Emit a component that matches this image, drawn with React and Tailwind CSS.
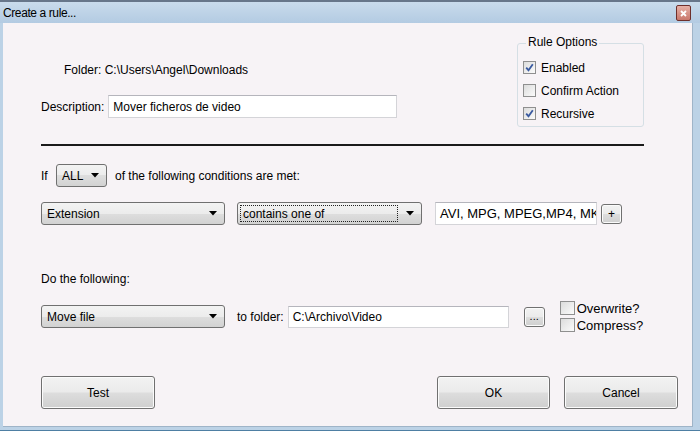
import React from "react";

const font = { fontFamily: '"Liberation Sans", Arial, sans-serif' };

function Arrow() {
  return (
    <svg width="8" height="5" viewBox="0 0 8 5" className="shrink-0">
      <path d="M0 0 H8 L4 4.5 Z" fill="#000" />
    </svg>
  );
}

function Select({ w, text, focus }) {
  return (
    <div
      className={`${w} h-[23px] shrink-0 flex items-center rounded-[3px] border border-[#707070] bg-[linear-gradient(to_bottom,#f3f3f3_0%,#ececec_50%,#dedede_50%,#d2d2d2_100%)] pl-[2px] pr-[7px]`}
    >
      <div
        className={`flex-1 h-[17px] flex items-center pl-[2px] ${focus ? "border border-dotted border-[#222]" : "border border-transparent"}`}
      >
        <span className="text-[12px] leading-none text-black whitespace-nowrap">{text}</span>
      </div>
      <div className="w-[16px] flex justify-end">
        <Arrow />
      </div>
    </div>
  );
}

function Button({ w, children, h = "h-[33px]", textCls = "text-[12px]" }) {
  return (
    <div
      className={`${w} ${h} shrink-0 flex items-center justify-center rounded-[3px] border border-[#707070] bg-[linear-gradient(to_bottom,#f2f2f2_0%,#ebebeb_48%,#dddddd_52%,#cfcfcf_100%)] shadow-[inset_0_0_0_1px_#fbfbfb]`}
    >
      <span className={`${textCls} leading-none text-black`}>{children}</span>
    </div>
  );
}

function Check({ checked, size = "w-[13px] h-[13px]" }) {
  return (
    <div
      className={`${size} shrink-0 border border-[#8f8f8f] bg-[linear-gradient(135deg,#dcdcdc,#fbfbfb)] flex items-center justify-center`}
    >
      {checked && (
        <svg width="9" height="9" viewBox="0 0 9 9">
          <path d="M1.2 4.6 L3.5 7.2 L7.8 1.2" fill="none" stroke="#3a5aa0" strokeWidth="1.8" />
        </svg>
      )}
    </div>
  );
}

function Input({ w, text, h = "h-[23px]", textCls = "text-[12px]" }) {
  return (
    <div className={`${w} ${h} shrink-0 flex items-center bg-white border border-[#d4d4d8] border-t-[#b5b5bc] pl-[4px] overflow-hidden`}>
      <span className={`${textCls} leading-none text-black whitespace-nowrap`}>{text}</span>
    </div>
  );
}

export default function App() {
  return (
    <div className="w-[700px] h-[431px] flex flex-col bg-[#bcd2e6] border-t-2 border-b border-t-[#67768a] border-b-[#4e7fa3] overflow-hidden" style={font}>
      {/* Title bar */}
      <div className="h-[21px] shrink-0 flex items-center justify-between pl-[3px] pr-[9px] bg-[linear-gradient(to_bottom,#c9dbec,#b3cbe2)]">
        <span className="text-[12px] leading-none text-black tracking-[-0.4px]">Create a rule...</span>
        <div className="w-[15px] h-[16px] rounded-[2px] border border-[#6e2f2b] bg-[linear-gradient(to_bottom,#e6b0a6,#c9786c)] flex items-center justify-center mt-[1px]">
          <svg width="7" height="7" viewBox="0 0 7 7">
            <path d="M1 1 L6 6 M6 1 L1 6" stroke="#fff" strokeWidth="1.8" />
          </svg>
        </div>
      </div>
      {/* Body */}
      <div className="flex-1 flex pl-[3px] pr-[7px] pb-[3px] bg-[#bcd2e6]">
        <div className="flex-1 flex flex-col bg-[#f7f3f6] border-r border-b border-[#9fb4c8] pl-[38px] pr-[48px] text-black">
          {/* Top section */}
          <div className="h-[121px] shrink-0 flex justify-between">
            <div className="flex flex-col">
              <div className="mt-[40px] ml-[23px] h-[14px] flex items-center">
                <span className="text-[12px] leading-none">Folder: C:\Users\Angel\Downloads</span>
              </div>
              <div className="mt-[18px] flex items-center gap-[4px]">
                <span className="text-[12px] leading-none">Description:</span>
                <Input w="w-[289px]" text="Mover ficheros de video" />
              </div>
            </div>
            <div className="mt-[20px] w-[127px] h-[84px] relative rounded-[3px] border border-[#d5dfe5] flex flex-col gap-[10px] pt-[17px] pl-[5px]">
              <span className="absolute -top-[8px] left-[8px] px-[2px] bg-[#f7f3f6] text-[12px] leading-none">Rule Options</span>
              <div className="flex items-center gap-[5px]">
                <Check checked />
                <span className="text-[12px] leading-none">Enabled</span>
              </div>
              <div className="flex items-center gap-[5px]">
                <Check />
                <span className="text-[12px] leading-none">Confirm Action</span>
              </div>
              <div className="flex items-center gap-[5px]">
                <Check checked />
                <span className="text-[12px] leading-none">Recursive</span>
              </div>
            </div>
          </div>
          {/* Rule line */}
          <div className="h-[2px] shrink-0 bg-[#1a1a1a]" />
          {/* If row */}
          <div className="mt-[18px] flex items-center">
            <span className="text-[12px] leading-none w-[15px]">If</span>
            <Select w="w-[51px]" text="ALL" />
            <span className="text-[12px] leading-none ml-[8px]">of the following conditions are met:</span>
          </div>
          {/* Condition row */}
          <div className="mt-[15px] flex items-center">
            <Select w="w-[184px]" text="Extension" />
            <div className="ml-[12px]">
              <Select w="w-[185px]" text="contains one of" focus />
            </div>
            <div className="ml-[13px]">
              <Input w="w-[162px]" text="AVI, MPG, MPEG,MP4, MKV" textCls="text-[13px]" />
            </div>
            <div className="ml-[4px]">
              <Button w="w-[21px]" h="h-[20px]" textCls="text-[12px]">+</Button>
            </div>
          </div>
          {/* Do the following */}
          <div className="mt-[47px] h-[14px] flex items-center">
            <span className="text-[12px] leading-none">Do the following:</span>
          </div>
          {/* Action row */}
          <div className="mt-[15px] flex items-center">
            <Select w="w-[184px]" text="Move file" />
            <span className="ml-[12px] text-[12px] leading-none whitespace-nowrap">to folder:</span>
            <div className="ml-[4px]">
              <Input w="w-[221px]" text="C:\Archivo\Video" h="h-[22px]" />
            </div>
            <div className="ml-[15px]">
              <Button w="w-[21px]" h="h-[20px]" textCls="text-[11px]">...</Button>
            </div>
            <div className="ml-[15px] flex flex-col gap-[3px]">
              <div className="flex items-center gap-[2px]">
                <Check size="w-[15px] h-[14px]" />
                <span className="text-[13px] leading-none">Overwrite?</span>
              </div>
              <div className="flex items-center gap-[2px]">
                <Check size="w-[15px] h-[14px]" />
                <span className="text-[13px] leading-none">Compress?</span>
              </div>
            </div>
          </div>
          {/* Buttons */}
          <div className="mt-[44px] flex items-center">
            <Button w="w-[114px]">Test</Button>
            <div className="flex-1" />
            <Button w="w-[113px]">OK</Button>
            <div className="ml-[14px] -mr-[34px]">
              <Button w="w-[114px]">Cancel</Button>
            </div>
          </div>
        </div>
      </div>
    </div>
  );
}
